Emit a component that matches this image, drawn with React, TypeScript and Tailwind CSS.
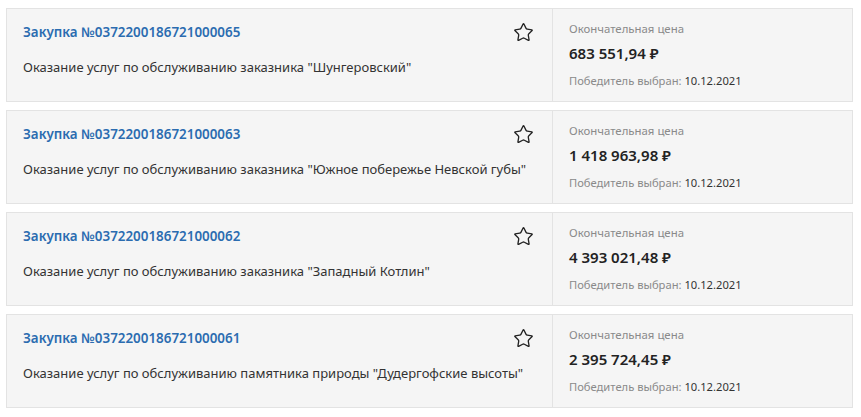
import { Star } from "lucide-react";

type Lot = {
  number: string;
  title: string;
  price: string;
  date: string;
};

const lots: Lot[] = [
  {
    number: "0372200186721000065",
    title: 'Оказание услуг по обслуживанию заказника "Шунгеровский"',
    price: "683 551,94 ₽",
    date: "10.12.2021",
  },
  {
    number: "0372200186721000063",
    title: 'Оказание услуг по обслуживанию заказника "Южное побережье Невской губы"',
    price: "1 418 963,98 ₽",
    date: "10.12.2021",
  },
  {
    number: "0372200186721000062",
    title: 'Оказание услуг по обслуживанию заказника "Западный Котлин"',
    price: "4 393 021,48 ₽",
    date: "10.12.2021",
  },
  {
    number: "0372200186721000061",
    title: 'Оказание услуг по обслуживанию памятника природы "Дудергофские высоты"',
    price: "2 395 724,45 ₽",
    date: "10.12.2021",
  },
];

function LotCard({ lot }: { lot: Lot }) {
  return (
    <div className="flex h-[94px] border border-[#e3e3e3] bg-[#f5f5f5]">
      <div className="flex min-w-0 flex-1 border-r border-[#e3e3e3] pl-4 pr-[18px]">
        <div className="flex min-w-0 flex-1 flex-col whitespace-nowrap">
          <a className="mt-[14px] text-[13.4px] font-semibold leading-[18px] text-[#2b6cb0]">
            Закупка №{lot.number}
          </a>
          <p className="mt-[17px] text-[13px] leading-[18px] text-[#333]">{lot.title}</p>
        </div>
        <Star className="mt-[13px] h-[21px] w-[21px] shrink-0 text-[#222]" strokeWidth={1.5} />
      </div>
      <div className="flex w-[299px] shrink-0 flex-col whitespace-nowrap pl-4">
        <span className="mt-[12px] text-[11.4px] leading-[16px] text-[#8a8a8a]">Окончательная цена</span>
        <span className="mt-[6px] text-[15px] font-semibold leading-[20px] text-[#222]">{lot.price}</span>
        <span className="mt-[10px] text-[11.2px] leading-[16px] text-[#8a8a8a]">
          Победитель выбран: <span className="text-[#333]">{lot.date}</span>
        </span>
      </div>
    </div>
  );
}

export default function App() {
  return (
    <div className="min-h-screen bg-white font-['Noto_Sans',sans-serif]">
      <div className="box-content flex w-[847px] flex-col gap-2 pl-[6px] pt-2">
        {lots.map((lot) => (
          <LotCard key={lot.number} lot={lot} />
        ))}
      </div>
    </div>
  );
}
